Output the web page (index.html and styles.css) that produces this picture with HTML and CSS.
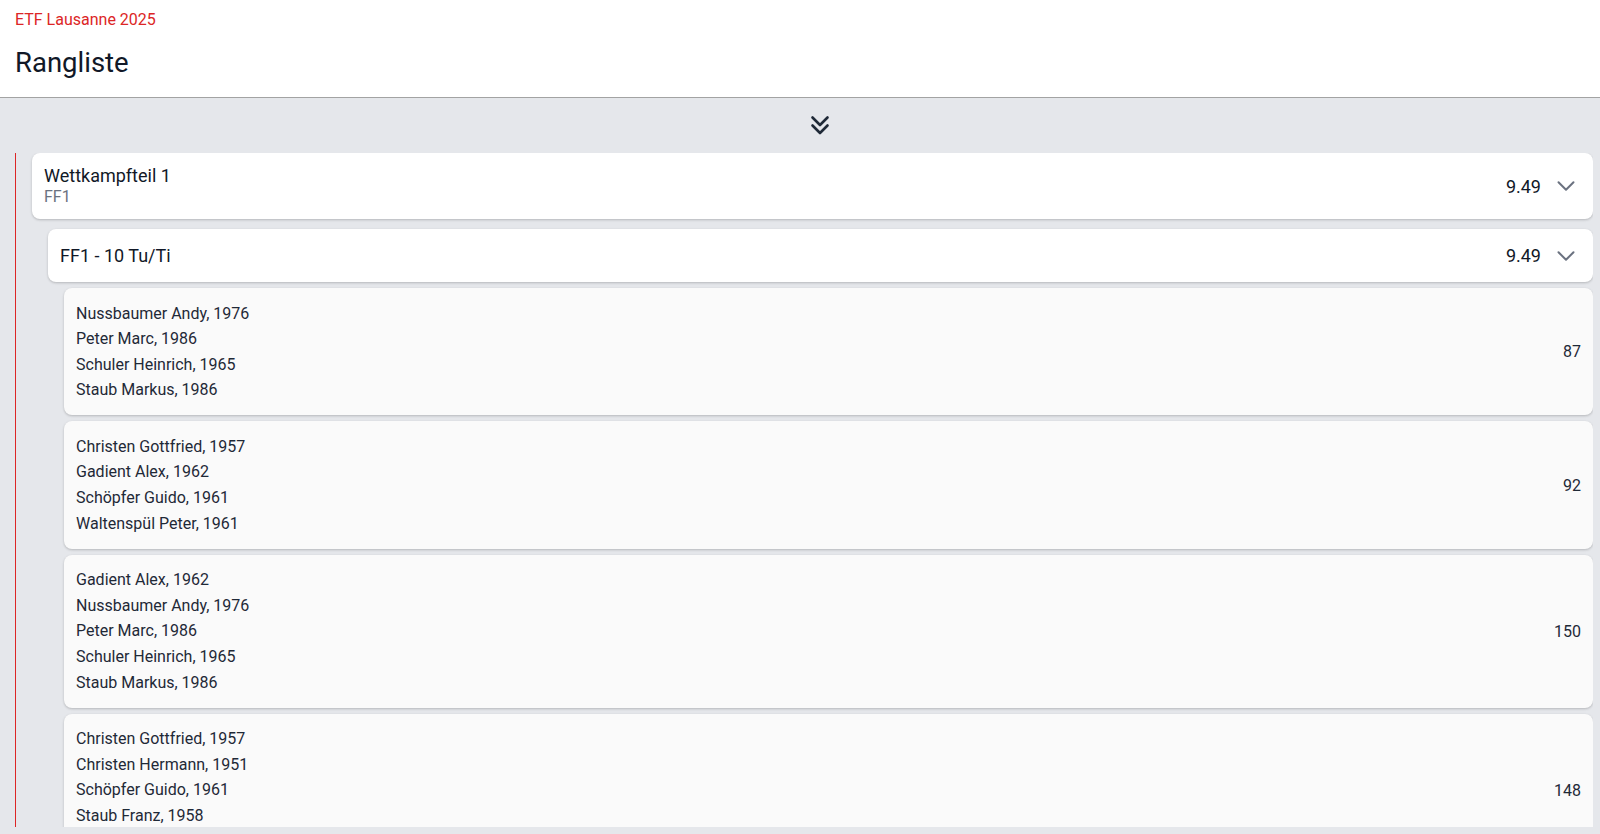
FILE: index.html
```html
<!DOCTYPE html>
<html lang="de">
<head>
<meta charset="utf-8">
<title>Rangliste</title>
<link rel="stylesheet" href="styles.css">
</head>
<body>
<header class="page-header">
  <div class="event">ETF Lausanne 2025</div>
  <h1 class="title">Rangliste</h1>
</header>
<main class="main">
  <div class="expand-row">
    <svg class="icon-double" viewBox="0 0 24 24" fill="none" stroke="currentColor" stroke-width="2.6" stroke-linecap="round" stroke-linejoin="round"><path d="M4.5 4.5l7.5 7.5 7.5-7.5M4.5 12.5l7.5 7.5 7.5-7.5"/></svg>
  </div>
  <div class="list">
    <div class="card card-part">
      <div class="card-text">
        <div class="card-title">Wettkampfteil 1</div>
        <div class="card-sub">FF1</div>
      </div>
      <div class="card-right">
        <span class="score">9.49</span>
        <svg class="icon-chev" viewBox="0 0 24 24" fill="none" stroke="currentColor" stroke-width="2" stroke-linecap="round" stroke-linejoin="round"><path d="M19.5 8.25l-7.5 7.5-7.5-7.5"/></svg>
      </div>
    </div>
    <div class="card card-cat">
      <div class="card-text">
        <div class="card-title">FF1 - 10 Tu/Ti</div>
      </div>
      <div class="card-right">
        <span class="score">9.49</span>
        <svg class="icon-chev" viewBox="0 0 24 24" fill="none" stroke="currentColor" stroke-width="2" stroke-linecap="round" stroke-linejoin="round"><path d="M19.5 8.25l-7.5 7.5-7.5-7.5"/></svg>
      </div>
    </div>
    <div class="card card-team">
      <div class="names">
        <div>Nussbaumer Andy, 1976</div>
        <div>Peter Marc, 1986</div>
        <div>Schuler Heinrich, 1965</div>
        <div>Staub Markus, 1986</div>
      </div>
      <div class="team-score">87</div>
    </div>
    <div class="card card-team">
      <div class="names">
        <div>Christen Gottfried, 1957</div>
        <div>Gadient Alex, 1962</div>
        <div>Schöpfer Guido, 1961</div>
        <div>Waltenspül Peter, 1961</div>
      </div>
      <div class="team-score">92</div>
    </div>
    <div class="card card-team">
      <div class="names">
        <div>Gadient Alex, 1962</div>
        <div>Nussbaumer Andy, 1976</div>
        <div>Peter Marc, 1986</div>
        <div>Schuler Heinrich, 1965</div>
        <div>Staub Markus, 1986</div>
      </div>
      <div class="team-score">150</div>
    </div>
    <div class="card card-team card-team-more">
      <div class="names">
        <div>Christen Gottfried, 1957</div>
        <div>Christen Hermann, 1951</div>
        <div>Schöpfer Guido, 1961</div>
        <div>Staub Franz, 1958</div>
      </div>
      <div class="team-score">148</div>
    </div>
  </div>
</main>
</body>
</html>
```

FILE: styles.css
```css
* { box-sizing: border-box; }
html, body { margin: 0; height: 100%; }
body {
  font-family: Roboto, "Liberation Sans", sans-serif;
  color: #1f2937;
  background: #e5e7eb;
  overflow: hidden;
}
.page-header {
  background: #fff;
  padding: 8px 15px 16px;
  border-bottom: 1px solid #a3a3a3;
}
.event {
  color: #dc2626;
  font-size: 16px;
  line-height: 24px;
}
.title {
  margin: 13px 0 0;
  font-size: 27.5px;
  line-height: 36px;
  font-weight: 400;
  color: #111827;
}
.main {
  height: calc(100vh - 98px);
  display: flex;
  flex-direction: column;
  padding-bottom: 7px;
}
.expand-row {
  display: flex;
  justify-content: center;
  padding: 15px 0 16px 40px;
  color: #1f2937;
}
.icon-double { width: 24px; height: 24px; display: block; }
.list {
  flex: 1;
  min-height: 0;
  overflow: hidden;
  margin: 0 7px 0 15px;
  border-left: 1px solid #dc2626;
  padding-left: 16px;
  display: flex;
  flex-direction: column;
  gap: 6px;
}
.card {
  flex-shrink: 0;
  background: #fff;
  border-radius: 8px;
  box-shadow: 0 1px 3px rgba(0,0,0,0.14), 0 1px 2px rgba(0,0,0,0.08);
  display: flex;
  align-items: center;
  justify-content: space-between;
}
.card-part {
  padding: 12px 15px 12px 12px;
  margin-bottom: 4px;
}
.card-cat {
  margin-left: 16px;
  padding: 14.5px 15px 14.5px 12px;
}
.card-title {
  font-size: 18px;
  line-height: 21px;
  color: #111827;
}
.card-sub {
  font-size: 16px;
  line-height: 21px;
  color: #6b7280;
}
.card-right {
  display: flex;
  align-items: center;
  gap: 13px;
}
.score {
  font-size: 18px;
  color: #111827;
}
.icon-chev { width: 24px; height: 24px; display: block; color: #6b7280; }
.card-team {
  margin-left: 32px;
  background: #fafafa;
  padding: 12.5px 12px;
}
.card-team-more .names {
  padding-bottom: 25.6px;
}
.names {
  font-size: 16px;
  line-height: 25.6px;
  color: #1f2937;
}
.team-score {
  font-size: 16px;
  color: #1f2937;
}
```
